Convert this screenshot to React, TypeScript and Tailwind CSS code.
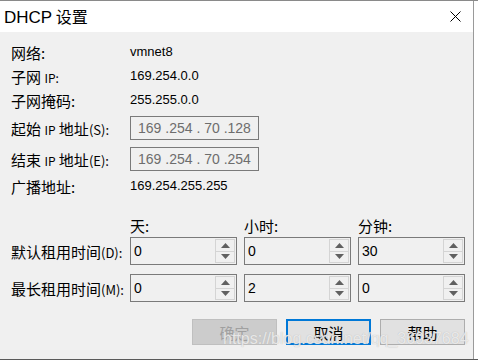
import React from "react";

const CJK = { fontFamily: '"Noto Sans CJK SC", "Liberation Sans", sans-serif' };
const LAT = { fontFamily: '"Liberation Sans", "Noto Sans CJK SC", sans-serif' };

function Label({ children, w = 119 }: { children: React.ReactNode; w?: number }) {
  return (
    <div className="shrink-0 text-[15px] leading-none text-black" style={{ ...CJK, width: w }}>
      {children}
    </div>
  );
}

function InfoRow({ label, value }: { label: React.ReactNode; value: string }) {
  return (
    <div className="flex h-[24px] items-center">
      <Label>{label}</Label>
      <div className="text-[13px] text-black" style={LAT}>{value}</div>
    </div>
  );
}

function IpBox({ text }: { text: string }) {
  return (
    <div className="flex h-[24px] w-[129px] items-center border border-[#7a7a7a] bg-[#f0f0f0] pl-[7px]">
      <span className="whitespace-pre text-[14px] text-[#6d6d6d]" style={LAT}>{text}</span>
    </div>
  );
}

function Arrow({ up }: { up: boolean }) {
  return (
    <svg width="9" height="5" viewBox="0 0 9 5">
      {up ? <polygon points="0,5 9,5 4.5,0" fill="#606060" /> : <polygon points="0,0 9,0 4.5,5" fill="#606060" />}
    </svg>
  );
}

function Spin({ value }: { value: string }) {
  return (
    <div className="flex h-[28px] w-[107px] border border-[#7a7a7a] bg-[#f0f0f0]">
      <div className="flex flex-1 items-center pl-[3px] text-[14px] text-black" style={LAT}>{value}</div>
      <div className="my-[1px] mr-[1px] flex w-[20px] flex-col">
        <div className="flex flex-1 items-center justify-center border border-[#d4d4d4] bg-[#f0f0f0]">
          <Arrow up />
        </div>
        <div className="flex flex-1 items-center justify-center border border-t-0 border-[#d4d4d4] bg-[#f0f0f0]">
          <Arrow up={false} />
        </div>
      </div>
    </div>
  );
}

export default function App() {
  return (
    <div className="relative h-[360px] w-[478px] overflow-hidden bg-white">
      <div className="h-[1px] w-full bg-[#8a8a8a]" />
      <div className="flex h-[358px] w-[474px] flex-col border-r border-[#9a9a9a] bg-[#f0f0f0]">
        {/* title bar */}
        <div className="flex h-[31px] shrink-0 items-center justify-between bg-white pl-[4px] pr-[12px]">
          <div className="text-[16px] leading-none text-black" style={CJK}>
            <span style={LAT} className="text-[17px]">DHCP</span> 设置
          </div>
          <svg width="11" height="11" viewBox="0 0 11 11">
            <path d="M0.5 0.5 L10.5 10.5 M10.5 0.5 L0.5 10.5" stroke="#000" strokeWidth="1" />
          </svg>
        </div>

        {/* body */}
        <div className="flex flex-col pl-[11px] pt-[8px]">
          <InfoRow label="网络:" value="vmnet8" />
          <InfoRow
            label={
              <>
                子网 <span className="text-[12px]">IP:</span>
              </>
            }
            value="169.254.0.0"
          />
          <InfoRow label="子网掩码:" value="255.255.0.0" />

          <div className="mt-[4px] flex items-center">
            <Label>
              起始 <span className="text-[12px]">IP</span> 地址<span className="text-[13px]">(S):</span>
            </Label>
            <IpBox text="169 .254 . 70 .128" />
          </div>
          <div className="mt-[7px] flex items-center">
            <Label>
              结束 <span className="text-[12px]">IP</span> 地址<span className="text-[13px]">(E):</span>
            </Label>
            <IpBox text="169 .254 . 70 .254" />
          </div>
          <div className="mt-[3px]">
            <InfoRow label="广播地址:" value="169.254.255.255" />
          </div>

          {/* lease headers */}
          <div className="mt-[17px] flex h-[20px] items-center">
            <div className="w-[119px] shrink-0" />
            <div className="flex gap-[7px] text-[15px] leading-none text-black" style={CJK}>
              <div className="w-[107px]">天:</div>
              <div className="w-[107px]">小时:</div>
              <div className="w-[107px]">分钟:</div>
            </div>
          </div>

          <div className="mt-[2px] flex items-center">
            <Label>
              默认租用时间<span className="text-[13px]">(D):</span>
            </Label>
            <div className="flex gap-[7px]">
              <Spin value="0" />
              <Spin value="0" />
              <Spin value="30" />
            </div>
          </div>
          <div className="mt-[9px] flex items-center">
            <Label>
              最长租用时间<span className="text-[13px]">(M):</span>
            </Label>
            <div className="flex gap-[7px]">
              <Spin value="0" />
              <Spin value="2" />
              <Spin value="0" />
            </div>
          </div>

          {/* buttons */}
          <div className="mt-[17px] flex gap-[9px] pl-[181px] text-[15px] leading-none" style={CJK}>
            <div className="flex h-[26px] w-[85px] items-center justify-center border border-[#bfbfbf] bg-[#cccccc] text-[#a0a0a0]">
              确定
            </div>
            <div className="flex h-[26px] w-[85px] items-center justify-center border-2 border-[#0078d7] bg-[#e1e1e1] text-black">
              取消
            </div>
            <div className="flex h-[26px] w-[85px] items-center justify-center border border-[#adadad] bg-[#e1e1e1] text-black">
              帮助
            </div>
          </div>
        </div>
      </div>
      <div className="h-[1px] w-full bg-[#5a5a5a]" />

      {/* watermark */}
      <div
        className="pointer-events-none absolute left-[223px] top-[327px] whitespace-nowrap text-[16px] text-white/70"
        style={{ ...LAT, textShadow: "0 0 1px #b0b0b0" }}
      >
        https://blog.csdn.net/qq_36937684
      </div>
    </div>
  );
}
